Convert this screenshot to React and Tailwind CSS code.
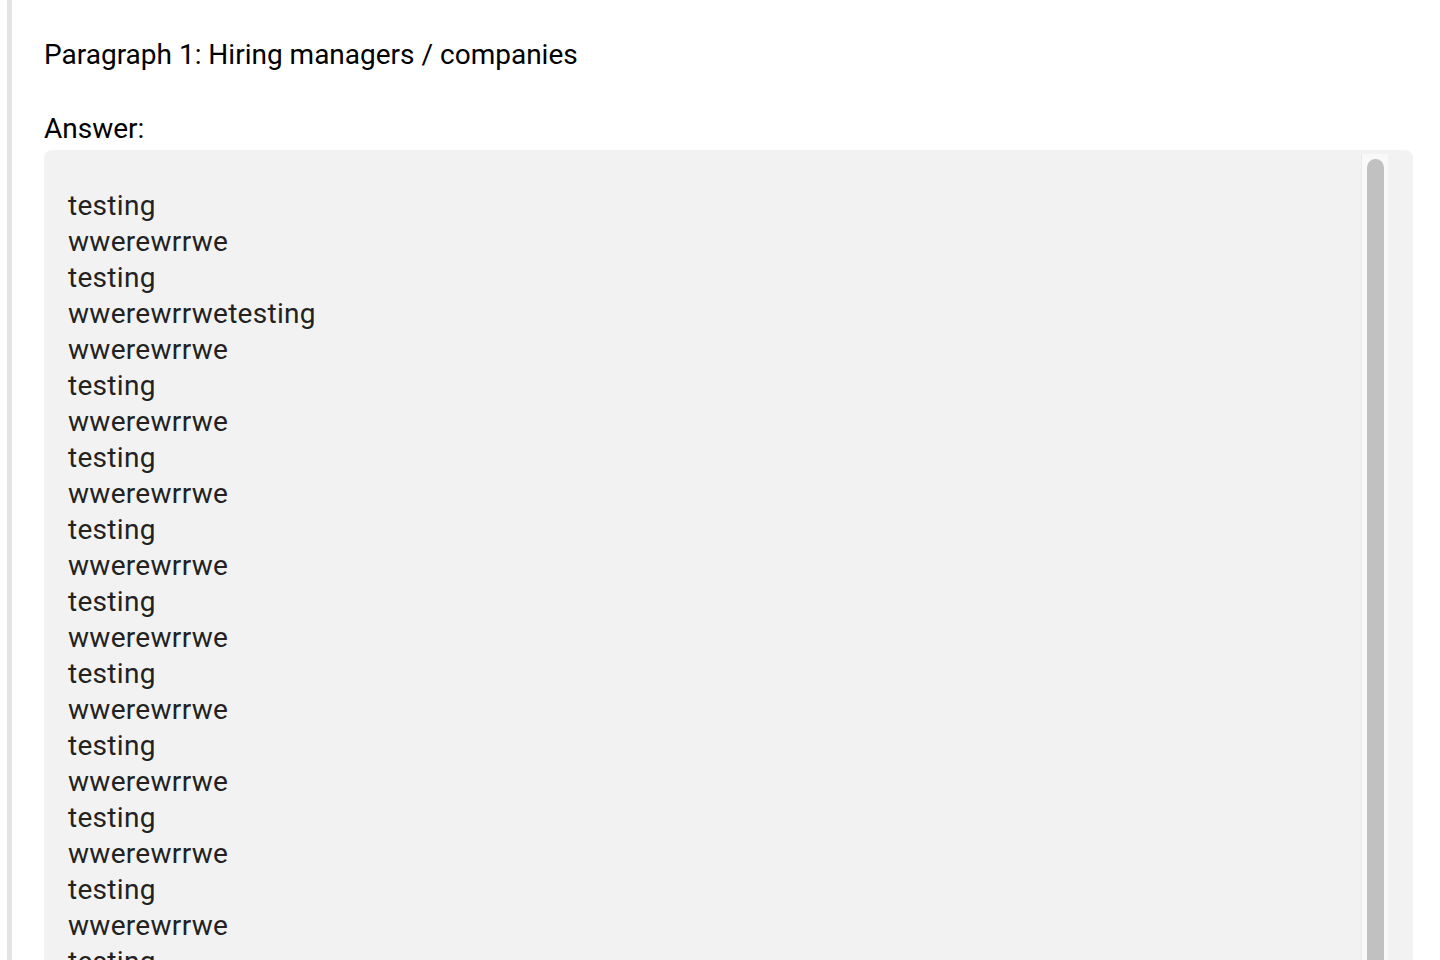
import React from 'react';

const lines = ['testing', 'wwerewrrwe', 'testing', 'wwerewrrwetesting'];
for (let i = 0; i < 10; i++) {
  lines.push('wwerewrrwe', 'testing');
}

const App = () => {
  return (
    <div className="h-screen overflow-hidden bg-white font-['Roboto',sans-serif]">
      <div className="ml-[7px] border-l-[5px] border-[#e4e4e4] pl-[32px] pr-[27px] pt-[37px] pb-10">
        <h2 className="text-[28px] leading-[36px] text-black">Paragraph 1: Hiring managers / companies</h2>
        <p className="mt-[38px] text-[28px] leading-[36px] text-black">Answer:</p>
        <div className="relative mt-[3px] h-[900px] overflow-hidden rounded-lg bg-[#f2f2f2]">
          <div className="pl-[24px] pr-[60px] pt-[38px] text-[28px] leading-[36px] tracking-[0.3px] text-[#222222]">
            {lines.map((l, i) => (
              <div key={i}>{l}</div>
            ))}
          </div>
          <div className="absolute right-[25px] top-[4px] bottom-0 w-[27px] border-l border-[#ebebeb] bg-[#f9f9f9]">
            <div className="ml-[5px] mt-[5px] h-[1000px] w-[17px] rounded-full bg-[#c1c1c1]" />
          </div>
        </div>
      </div>
    </div>
  );
};

export default App;
